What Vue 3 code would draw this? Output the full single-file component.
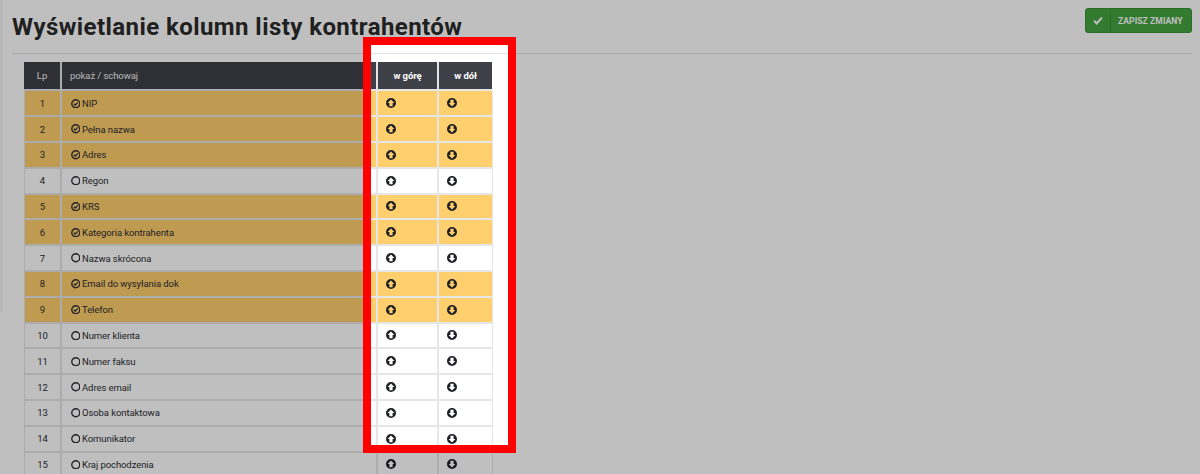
<script setup>
const rows = [
  ['NIP', true], ['Pełna nazwa', true], ['Adres', true], ['Regon', false], ['KRS', true],
  ['Kategoria kontrahenta', true], ['Nazwa skrócona', false], ['Email do wysyłania dok', true],
  ['Telefon', true], ['Numer klienta', false], ['Numer faksu', false], ['Adres email', false],
  ['Osoba kontaktowa', false], ['Komunikator', false], ['Kraj pochodzenia', false]
]
</script>

<template>
  <div class="page">
    <div class="edge"></div>
    <header class="top">
      <h1 class="title">Wyświetlanie kolumn listy kontrahentów</h1>
      <button class="save">
        <span class="save-icon">
          <svg width="10" height="9" viewBox="0 0 9 8"><path d="M1 4.3 3.3 6.6 8 1.4" fill="none" stroke="currentColor" stroke-width="1.9"/></svg>
        </span>
        <span class="save-label">ZAPISZ ZMIANY</span>
      </button>
    </header>
    <div class="table">
      <div class="row head">
        <div class="cell lp">Lp</div>
        <div class="cell name">pokaż / schowaj</div>
        <div class="cell up"><b>w górę</b></div>
        <div class="cell down"><b>w dół</b></div>
      </div>
      <div v-for="(r, i) in rows" :key="r[0]" class="row body" :class="{ on: r[1] }">
        <div class="cell lp">{{ i + 1 }}</div>
        <div class="cell name">
          <svg class="tick" viewBox="0 0 10 10">
            <circle cx="5" cy="5" r="4.2" fill="none" stroke="currentColor" stroke-width="1.4"/>
            <path v-if="r[1]" d="M2.9 5 4.5 6.5 7.2 3.6" fill="none" stroke="currentColor" stroke-width="1.3"/>
          </svg>
          <span>{{ r[0] }}</span>
        </div>
        <div class="cell up arrow">
          <svg viewBox="0 0 10 10"><path fill-rule="evenodd" d="M5 0a5 5 0 1 1 0 10A5 5 0 0 1 5 0ZM5 1.600 1.600 5H3.400V8.200H6.600V5H8.400Z"/></svg>
        </div>
        <div class="cell down arrow">
          <svg viewBox="0 0 10 10"><path fill-rule="evenodd" d="M5 0a5 5 0 1 1 0 10A5 5 0 0 1 5 0ZM5 8.400 8.400 5H6.600V1.800H3.400V5H1.600Z"/></svg>
        </div>
      </div>
    </div>
    <div class="spotlight"></div>
  </div>
</template>

<style scoped>
.page {
  position: relative;
  width: 1200px;
  height: 474px;
  overflow: hidden;
  background: #fff;
  font-family: Roboto, "Liberation Sans", sans-serif;
  color: #2c2d33;
}
.edge {
  position: absolute;
  left: 0;
  top: 0;
  width: 3px;
  height: 312px;
  background: #f4f4f4;
}
.top {
  display: flex;
  justify-content: space-between;
  align-items: flex-start;
  height: 45px;
  margin: 0 8px 0 12px;
  padding-top: 8px;
  border-bottom: 1px solid #e2e2e2;
}
.title {
  margin: 5px 0 0;
  font-size: 24px;
  line-height: 28px;
  font-weight: 700;
  letter-spacing: .43px;
  color: #2b2b2b;
}
.save {
  display: flex;
  align-items: stretch;
  width: 107px;
  height: 25px;
  padding: 0;
  border: 1px solid #3b9237;
  border-radius: 3px;
  background: #43a43f;
  color: #fff;
  font: inherit;
}
.save-icon {
  display: flex;
  align-items: center;
  justify-content: center;
  width: 24px;
  border-right: 1px solid #3b9237;
}
.save-label {
  flex: 1;
  align-self: center;
  font-size: 8.5px;
  font-weight: 700;
  letter-spacing: .1px;
  text-align: left;
  padding-left: 7px;
  white-space: nowrap;
}
.table {
  margin: 8px 0 0 24px;
  width: 469px;
}
.row {
  display: grid;
  grid-template-columns: 36px 314px 59px 53px;
  column-gap: 2px;
  height: 25.8px;
  box-sizing: border-box;
  border-bottom: 2px solid #e6e6e6;
  background: #e6e6e6;
  font-size: 9.5px;
  letter-spacing: -.08px;
}
.row.body {
  grid-template-columns: 35px 314px 59px 53px;
  padding-left: 1px;
}
.row.head {
  width: 468px;
  height: 29.4px;
  color: #f2f2f4;
}
.cell {
  display: flex;
  align-items: center;
  background: #fff;
}
.head .cell {
  background: #3e4047;
}
.on .cell {
  background: #ffcf6d;
}
.lp {
  justify-content: center;
}
.name {
  padding-left: 9px;
  gap: 2px;
}
.head .name {
  padding-left: 8px;
}
.head .up,
.head .down {
  justify-content: center;
  color: #fff;
}
.tick {
  width: 9.500px;
  height: 9.500px;
  flex: none;
  margin-left: -.5px;
}
.arrow {
  padding-left: 8px;
}
.arrow svg {
  width: 10px;
  height: 10px;
  fill: #1f2026;
}
.spotlight {
  position: absolute;
  left: 363px;
  top: 37px;
  width: 153px;
  height: 416px;
  box-sizing: border-box;
  border: 8px solid #ff0000;
  box-shadow: 0 0 0 2000px rgba(0, 0, 0, .25);
}
</style>
